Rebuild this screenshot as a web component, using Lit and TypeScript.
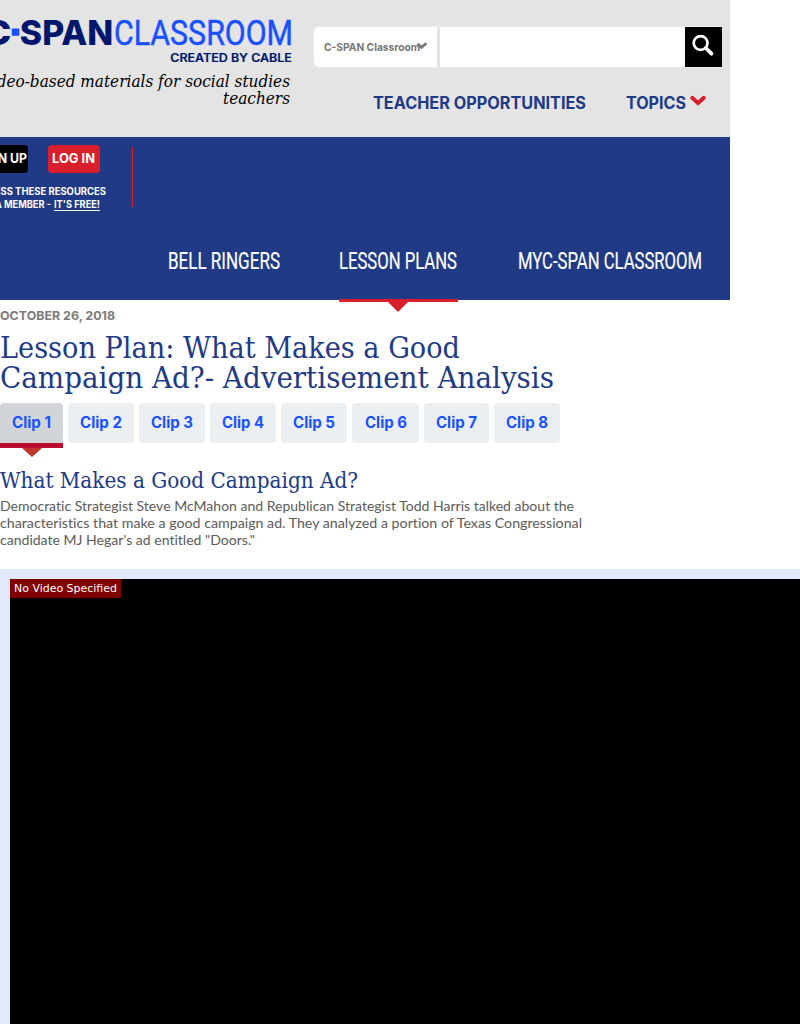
import { LitElement, html, svg, css } from "lit";
import { customElement, state } from "lit/decorators.js";

/* A line of text set to an exact measure; `base` is the baseline inside a box of height `h`. */
const line = (text: string, w: number, h: number, base: number, cls = "") => html`
  <svg class="line ${cls}" width=${w} height=${h}>
    <text x="0" y=${base} textLength=${w} lengthAdjust="spacingAndGlyphs">${text}</text>
  </svg>`;

const word = (text: string, x: number, y: number, w: number, cls: string) => svg`
  <text class=${cls} x=${x} y=${y} textLength=${w} lengthAdjust="spacingAndGlyphs">${text}</text>`;

@customElement("site-header")
class SiteHeader extends LitElement {
  static styles = css`
    :host { display: block; width: 730px; font-family: Lato, sans-serif; font-variant-ligatures: none; }
    svg { display: block; overflow: visible; flex: none; }
    .top { display: flex; height: 137px; background: #e4e4e4; }
    .brand { width: 292px; }
    .logo { overflow: hidden; }
    .span { font: 800 34px Inter, sans-serif; fill: #00176d; }
    .class { font: 400 34.5px Roboto, sans-serif; fill: #1951ff; stroke: #1951ff; stroke-width: 0.5px; }
    .cable { font: 600 11.3px Inter, sans-serif; fill: #00176d; stroke: #00176d; stroke-width: 0.2px; }
    .tagline { display: flex; flex-direction: column; align-items: flex-end; width: 290px; padding-top: 5px; }
    .tag { font: italic 17.5px "DejaVu Serif Condensed", "DejaVu Serif", serif; fill: #000; }
    .tools { margin-left: 21px; padding-top: 26px; }
    .search { display: flex; width: 409px; height: 42px; box-sizing: border-box; border: 1px solid #ebebeb; border-right: 0; border-radius: 6px 0 0 6px; }
    .scope { display: flex; width: 123px; box-sizing: border-box; padding: 10px 0 0 10px; background: #fff; border-radius: 5px 0 0 5px; }
    .scope-text { font: 700 10.8px Inter, sans-serif; fill: #777; }
    .caret { margin: 5px 0 0 -4px; }
    .field { width: 245px; margin-left: 3px; background: #fff; }
    .go { width: 37px; background: #000; display: flex; padding: 7px 0 0 7px; box-sizing: border-box; }
    .links { display: flex; padding: 24px 0 0 60px; }
    .link { font: 700 16.8px Inter, sans-serif; fill: #203a86; }
    .topics { display: flex; margin-left: 40px; }
    .chev { margin: 3px 0 0 4px; }
    .bar { height: 163px; background: #203a86; }
    .account { display: flex; height: 77px; }
    .member { width: 132px; padding-top: 8px; box-sizing: border-box; }
    .buttons { display: flex; width: 100px; justify-content: flex-end; gap: 20px; }
    .btn { width: 52px; height: 28px; box-sizing: border-box; flex: none; border-radius: 4px; background: #000; display: flex; justify-content: center; padding-right: 1px; }
    .btn.red { background: #da1f2c; }
    .btn-text { font: 700 12.8px Inter, sans-serif; fill: #fff; }
    .free { display: flex; flex-direction: column; align-items: flex-end; width: 106px; padding-top: 12px; }
    .free-row { display: flex; gap: 3px; padding-right: 6px; }
    .small { font: 700 9.9px Inter, sans-serif; fill: #fff; }
    .under { border-bottom: 1px solid #fff; }
    .rule { width: 1px; height: 60px; margin-top: 10px; background: #da1f2c; }
    .nav { display: flex; height: 86px; padding-left: 168px; }
    .item { height: 85px; display: flex; flex-direction: column; align-items: flex-start; }
    .gap { margin-left: 59px; }
    .gap-last { margin-left: 60px; }
    .nav-text { font: 400 24px Roboto, sans-serif; fill: #fff; stroke: #fff; stroke-width: 0.2px; }
    .mark { width: 119px; height: 3px; margin-top: 62px; background: #da1f2c; flex: none; }
    .arrow { flex: none; margin-left: 48px; position: relative; z-index: 1; }
  `;

  render() {
    return html`
      <header>
        <div class="top">
          <div class="brand">
            <svg class="logo" width="292" height="68">
              ${word("C", -18, 44.5, 29.5, "span")}
              <rect x="11.8" y="28.5" width="7.5" height="7.3" fill="#1951ff" />
              ${word("SPAN", 19.8, 44.5, 93.5, "span")}
              ${word("CLASSROOM", 114, 44.5, 179, "class")}
              ${word("CREATED BY CABLE", 170.3, 61.6, 121.5, "cable")}
            </svg>
            <div class="tagline">
              ${line("Video-based materials for social studies", 309, 17, 14, "tag")}
              ${line("teachers", 67, 17, 14, "tag")}
            </div>
          </div>
          <div class="tools">
            <div class="search">
              <div class="scope">
                ${line("C-SPAN Classroom", 96, 20, 14, "scope-text")}
                <svg class="caret" width="12" height="8"><path d="M1.6 1.8 L5.4 5.4 L10.4 1.2" fill="none" stroke="#777" stroke-width="2.8" /></svg>
              </div>
              <div class="field"></div>
              <div class="go">
                <svg width="24" height="24"><circle cx="8.6" cy="9" r="6.9" fill="none" stroke="#fff" stroke-width="2.7" /><path d="M13.8 14 L19.5 19.7" stroke="#fff" stroke-width="3.8" stroke-linecap="round" /></svg>
              </div>
            </div>
            <div class="links">
              ${line("TEACHER OPPORTUNITIES", 213, 24, 17, "link")}
              <div class="topics">
                ${line("TOPICS", 60, 24, 17, "link")}
                <svg class="chev" width="16" height="12"><path d="M2.2 2.8 L8 8.2 L13.8 2.8" fill="none" stroke="#da1f2c" stroke-width="3.9" stroke-linecap="round" /></svg>
              </div>
            </div>
          </div>
        </div>
        <div class="bar">
          <div class="account">
            <div class="member">
              <div class="buttons">
                <div class="btn">${line("SIGN UP", 50, 28, 18, "btn-text")}</div>
                <div class="btn red">${line("LOG IN", 43, 28, 18, "btn-text")}</div>
              </div>
              <div class="free">
                ${line("ACCESS THESE RESOURCES", 132, 13, 10, "small")}
                <div class="free-row">
                  ${line("AS A MEMBER -", 71, 13, 10, "small")}
                  <div class="under">${line("IT'S FREE!", 46, 11, 10, "small")}</div>
                </div>
              </div>
            </div>
            <div class="rule"></div>
          </div>
          <nav class="nav">
            <div class="item">${line("BELL RINGERS", 112, 60, 55, "nav-text")}</div>
            <div class="item gap">
              ${line("LESSON PLANS", 118, 23, 55, "nav-text")}
              <div class="mark"></div>
              <svg class="arrow" width="22" height="10"><path d="M0.5 -0.5 H21.5 L11 10 Z" fill="#da1f2c" /></svg>
            </div>
            <div class="item gap-last">${line("MYC-SPAN CLASSROOM", 184, 60, 55, "nav-text")}</div>
          </nav>
        </div>
      </header>`;
  }
}

@customElement("lesson-plan")
class LessonPlan extends LitElement {
  static styles = css`
    :host { display: block; font-family: Lato, sans-serif; font-variant-ligatures: none; }
    svg { display: block; overflow: visible; flex: none; }
    .intro { height: 103px; box-sizing: border-box; padding-top: 6px; }
    .date { font: 700 12.2px Inter, sans-serif; fill: #7b7b7b; }
    .title { font: 30px "DejaVu Serif Condensed", "DejaVu Serif", serif; fill: #203a86; }
    .heading { padding: 6px 0 0 0; }
    .tabs { display: flex; gap: 5px; height: 62px; }
    .tab { height: 40px; border-radius: 4px; background: #ebeff1; display: flex; flex-direction: column; align-items: center; cursor: pointer; }
    .tab.on { background: #d1d5d9; border-bottom: 5px solid #ba0c2f; border-radius: 4px 4px 0 0; }
    .clip { font: 700 15.3px Inter, sans-serif; fill: #1951ff; }
    .tip { margin-top: 5px; }
    .about { height: 104px; }
    .sub { font: 22.5px "DejaVu Serif Condensed", "DejaVu Serif", serif; fill: #203a86; }
    .body { font-size: 13.4px; fill: #5b5b5b; }
    .video { height: 455px; box-sizing: border-box; padding: 10px 0 0 10px; background: #e2e9fa; }
    .screen { height: 445px; background: #000; }
    .notice { width: 111px; height: 19px; box-sizing: border-box; padding-left: 4px; background: #800000; }
    .notice-text { font: 11px "DejaVu Sans", sans-serif; fill: #fff; }
  `;

  @state() private active = 0;

  private clips = [
    { box: 63, text: 39 }, { box: 66, text: 42 }, { box: 66, text: 42 }, { box: 66, text: 42 },
    { box: 66, text: 42 }, { box: 67, text: 42 }, { box: 65, text: 41 }, { box: 66, text: 42 },
  ];

  render() {
    return html`
      <main>
        <div class="intro">
          ${line("OCTOBER 26, 2018", 115, 20, 14, "date")}
          <div class="heading">
            ${line("Lesson Plan: What Makes a Good", 460, 30, 26, "title")}
            ${line("Campaign Ad?- Advertisement Analysis", 554, 30, 26, "title")}
          </div>
        </div>
        <div class="tabs">
          ${this.clips.map((c, i) => html`
            <div class="tab ${i === this.active ? "on" : ""}" style="width:${c.box}px" @click=${() => (this.active = i)}>
              ${line(`Clip ${i + 1}`, c.text, 40, 25.3, "clip")}
              ${i === this.active
                ? html`<svg class="tip" width="20" height="9"><path d="M0 0 H20 L10 9 Z" fill="#c1352b" /></svg>`
                : ""}
            </div>`)}
        </div>
        <div class="about">
          ${line("What Makes a Good Campaign Ad?", 358, 33, 23, "sub")}
          ${line("Democratic Strategist Steve McMahon and Republican Strategist Todd Harris talked about the", 574, 17, 13, "body")}
          ${line("characteristics that make a good campaign ad. They analyzed a portion of Texas Congressional", 582, 17, 13, "body")}
          ${line("candidate MJ Hegar's ad entitled \"Doors.\"", 255, 17, 13, "body")}
        </div>
        <div class="video">
          <div class="screen"><div class="notice">${line("No Video Specified", 103, 19, 13, "notice-text")}</div></div>
        </div>
      </main>`;
  }
}

@customElement("app-root")
class AppRoot extends LitElement {
  static styles = css`
    :host { display: block; width: 800px; height: 1024px; overflow: hidden; background: #fff; }
  `;

  render() {
    return html`<site-header></site-header><lesson-plan></lesson-plan>`;
  }
}
